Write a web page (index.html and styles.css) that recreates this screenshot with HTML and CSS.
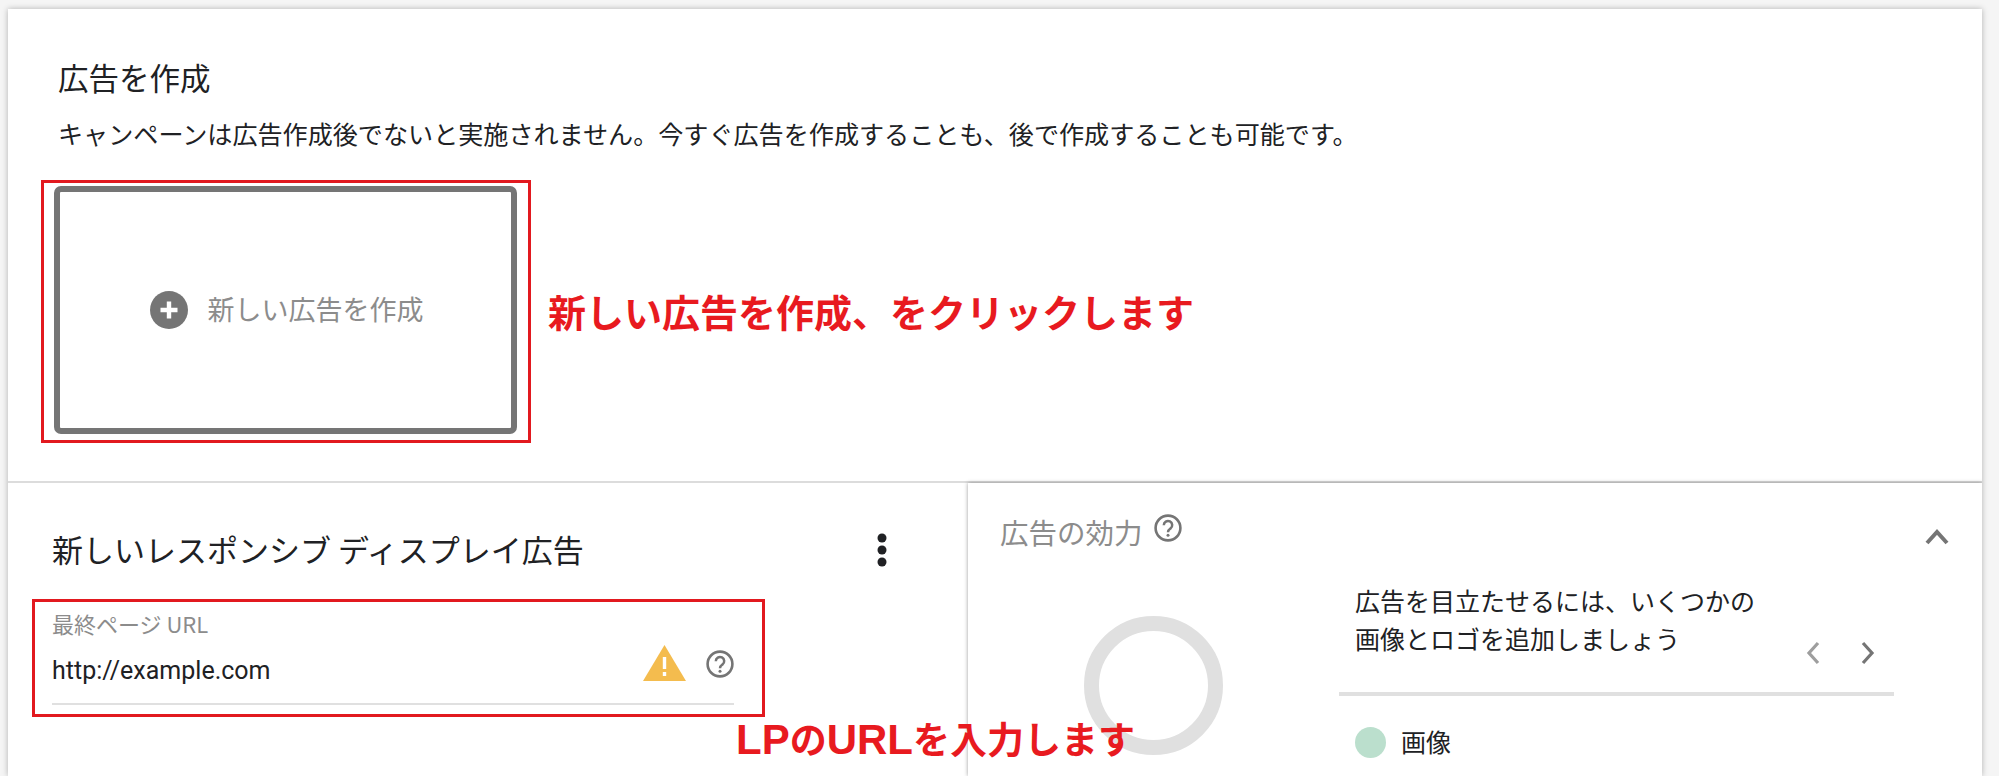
FILE: index.html
```html
<!DOCTYPE html>
<html lang="ja">
<head>
<meta charset="utf-8">
<title>広告を作成</title>
<link rel="stylesheet" href="styles.css">
</head>
<body>
<main class="card">
  <section class="create">
    <h2 class="create-title">広告を作成</h2>
    <p class="create-desc">キャンペーンは広告作成後でないと実施されません。今すぐ広告を作成することも、後で作成することも可能です。</p>
    <div class="create-row">
      <div class="mark mark-create">
        <div class="new-ad">
          <svg class="plus" viewBox="0 0 38 38"><circle cx="19" cy="19" r="19" fill="#757575"/><path d="M19 10.5v17M10.5 19h17" stroke="#fff" stroke-width="4.4"/></svg>
          <span class="new-ad-text">新しい広告を作成</span>
        </div>
      </div>
      <span class="note note-create">新しい広告を作成、をクリックします</span>
    </div>
  </section>
  <section class="lower">
    <div class="editor">
      <div class="editor-head">
        <h2 class="editor-title">新しいレスポンシブ ディスプレイ広告</h2>
        <svg class="kebab" viewBox="0 0 10 34"><circle cx="5" cy="5" r="4.5"/><circle cx="5" cy="17" r="4.5"/><circle cx="5" cy="29" r="4.5"/></svg>
      </div>
      <div class="mark mark-url">
        <div class="field-label">最終ページ URL</div>
        <div class="field-row">
          <span class="field-value">http://example.com</span>
          <svg class="warn" viewBox="0 0 43 36"><path d="M21.5 0L43 36H0z" fill="#f4bc4e"/><path d="M21.5 12v12M21.5 27v4" stroke="#fff" stroke-width="3.4"/></svg>
          <svg class="help help-field" viewBox="0 0 28 28"><circle cx="14" cy="14" r="12.4" fill="none" stroke="#757575" stroke-width="2.6"/><path d="M9.8 11.2a4.2 4.2 0 1 1 6.6 3.4c-1.5 1.1-2.4 1.8-2.4 3.6" fill="none" stroke="#757575" stroke-width="2.5"/><circle cx="14" cy="21.2" r="1.5" fill="#757575"/></svg>
        </div>
      </div>
      <span class="note note-url"><span class="note-latin">LP</span>の<span class="note-latin">URL</span>を入力します</span>
    </div>
    <aside class="strength">
      <div class="strength-head">
        <h3 class="strength-title">広告の効力</h3>
        <svg class="help help-title" viewBox="0 0 28 28"><circle cx="14" cy="14" r="12.4" fill="none" stroke="#757575" stroke-width="2.6"/><path d="M9.8 11.2a4.2 4.2 0 1 1 6.6 3.4c-1.5 1.1-2.4 1.8-2.4 3.6" fill="none" stroke="#757575" stroke-width="2.5"/><circle cx="14" cy="21.2" r="1.5" fill="#757575"/></svg>
        <svg class="collapse" viewBox="0 0 24 16"><path d="M2 14L12 3l10 11" fill="none" stroke="#757575" stroke-width="4"/></svg>
      </div>
      <div class="strength-body">
        <div class="ring"></div>
        <div class="tips">
          <div class="tip">
            <p class="tip-text">広告を目立たせるには、いくつかの<br>画像とロゴを追加しましょう</p>
            <div class="pager">
              <svg class="page-arrow" viewBox="0 0 16 24"><path d="M13 2L4 12l9 10" fill="none" stroke="#9e9e9e" stroke-width="3.2"/></svg>
              <svg class="page-arrow" viewBox="0 0 16 24"><path d="M3 2l9 10-9 10" fill="none" stroke="#757575" stroke-width="3.2"/></svg>
            </div>
          </div>
          <div class="legend">
            <span class="legend-dot"></span>
            <span class="legend-text">画像</span>
          </div>
        </div>
      </div>
    </aside>
  </section>
</main>
</body>
</html>
```
FILE: styles.css
```css
* { box-sizing: border-box; }
html, body { margin: 0; height: 776px; overflow: hidden; }
body {
  background: #f5f5f5;
  padding: 9px 17px 0 8px;
  font-family: "Noto Sans CJK JP", "Liberation Sans", sans-serif;
  color: #202124;
}
h2, h3, p { margin: 0; font-weight: 400; }
.card {
  position: relative;
  background: #fff;
  height: 767px;
  box-shadow: 0 0 6px rgba(0,0,0,.28);
  overflow: hidden;
}
.create { height: 472px; padding: 46px 0 0 33px; }
.create-title { font-size: 30.5px; line-height: 44px; margin-left: 17px; }
.create-desc { font-size: 25.1px; line-height: 36px; margin: 16px 0 0 17px; white-space: nowrap; }
.create-row { display: flex; align-items: center; margin-top: 29px; }
.mark { border: 3px solid #e2191f; }
.mark-create { width: 490px; height: 263px; padding: 3px 11px 6px 10px; }
.new-ad {
  height: 100%;
  border: 6px solid #757575;
  border-radius: 7px;
  display: flex;
  align-items: center;
  justify-content: center;
  gap: 20px;
  padding-left: 2px;
}
.plus { width: 38px; height: 38px; }
.new-ad-text { font-size: 27px; color: #8c8c8c; margin-top: -4px; }
.note { color: #e81a1f; font-weight: 700; font-size: 38px; line-height: 50px; white-space: nowrap; }
.note-create { margin: -2px 0 0 17px; }
.lower { display: grid; grid-template-columns: 960px 1014px; border-top: 2px solid #dcdcdc; height: 295px; }
.editor { position: relative; }
.editor-head { display: flex; align-items: center; justify-content: space-between; padding: 43px 81px 0 44px; }
.editor-title { font-size: 31px; line-height: 46px; white-space: nowrap; }
.kebab { width: 10px; height: 34px; fill: #202124; margin-top: 2px; }
.mark-url { width: 733px; height: 118px; margin: 27px 0 0 24px; padding: 5px 28px 0 17px; }
.field-label { font-size: 22px; line-height: 32px; color: #8c8c8c; }
.field-row { display: flex; align-items: center; height: 66px; border-bottom: 2px solid #e0e0e0; padding-bottom: 1px; }
.field-value { font-family: Roboto, sans-serif; font-size: 25px; flex: 1; }
.warn { width: 43px; height: 36px; margin-top: -15px; }
.help { width: 28px; height: 28px; }
.help-field { margin: -13px 0 0 20px; }
.note-url { position: absolute; left: 728px; top: 230px; font-size: 37px; }
.note-latin { font-family: "Liberation Sans", sans-serif; font-size: 42px; }
.strength { box-shadow: 0 0 4px rgba(0,0,0,.4); background: #fff; }
.strength-head { display: flex; align-items: center; padding: 30px 33px 0 32px; height: 78px; }
.strength-title { font-size: 28.5px; color: #8c8c8c; line-height: 44px; margin-top: -10px; }
.help-title { margin: -18px 0 0 11px; }
.collapse { width: 24px; height: 16px; margin: 0 0 0 auto; }
.strength-body { display: flex; padding-left: 116px; padding-top: 55px; }
.ring { width: 139px; height: 139px; border: 15px solid #e0e0e0; border-radius: 50%; flex: none; }
.tips { margin-left: 116px; width: 555px; margin-top: -35px; }
.tip { position: relative; padding-left: 16px; border-bottom: 4px solid #e0e0e0; height: 115px; }
.tip-text { font-size: 25px; line-height: 38px; white-space: nowrap; }
.pager { position: absolute; right: 18px; top: 60px; display: flex; gap: 39px; }
.page-arrow { width: 16px; height: 24px; }
.legend { display: flex; align-items: center; padding: 29px 0 0 16px; gap: 15px; }
.legend-dot { width: 31px; height: 31px; border-radius: 50%; background: #bbdfcd; }
.legend-text { font-size: 25px; line-height: 36px; margin-top: -2px; }
```
